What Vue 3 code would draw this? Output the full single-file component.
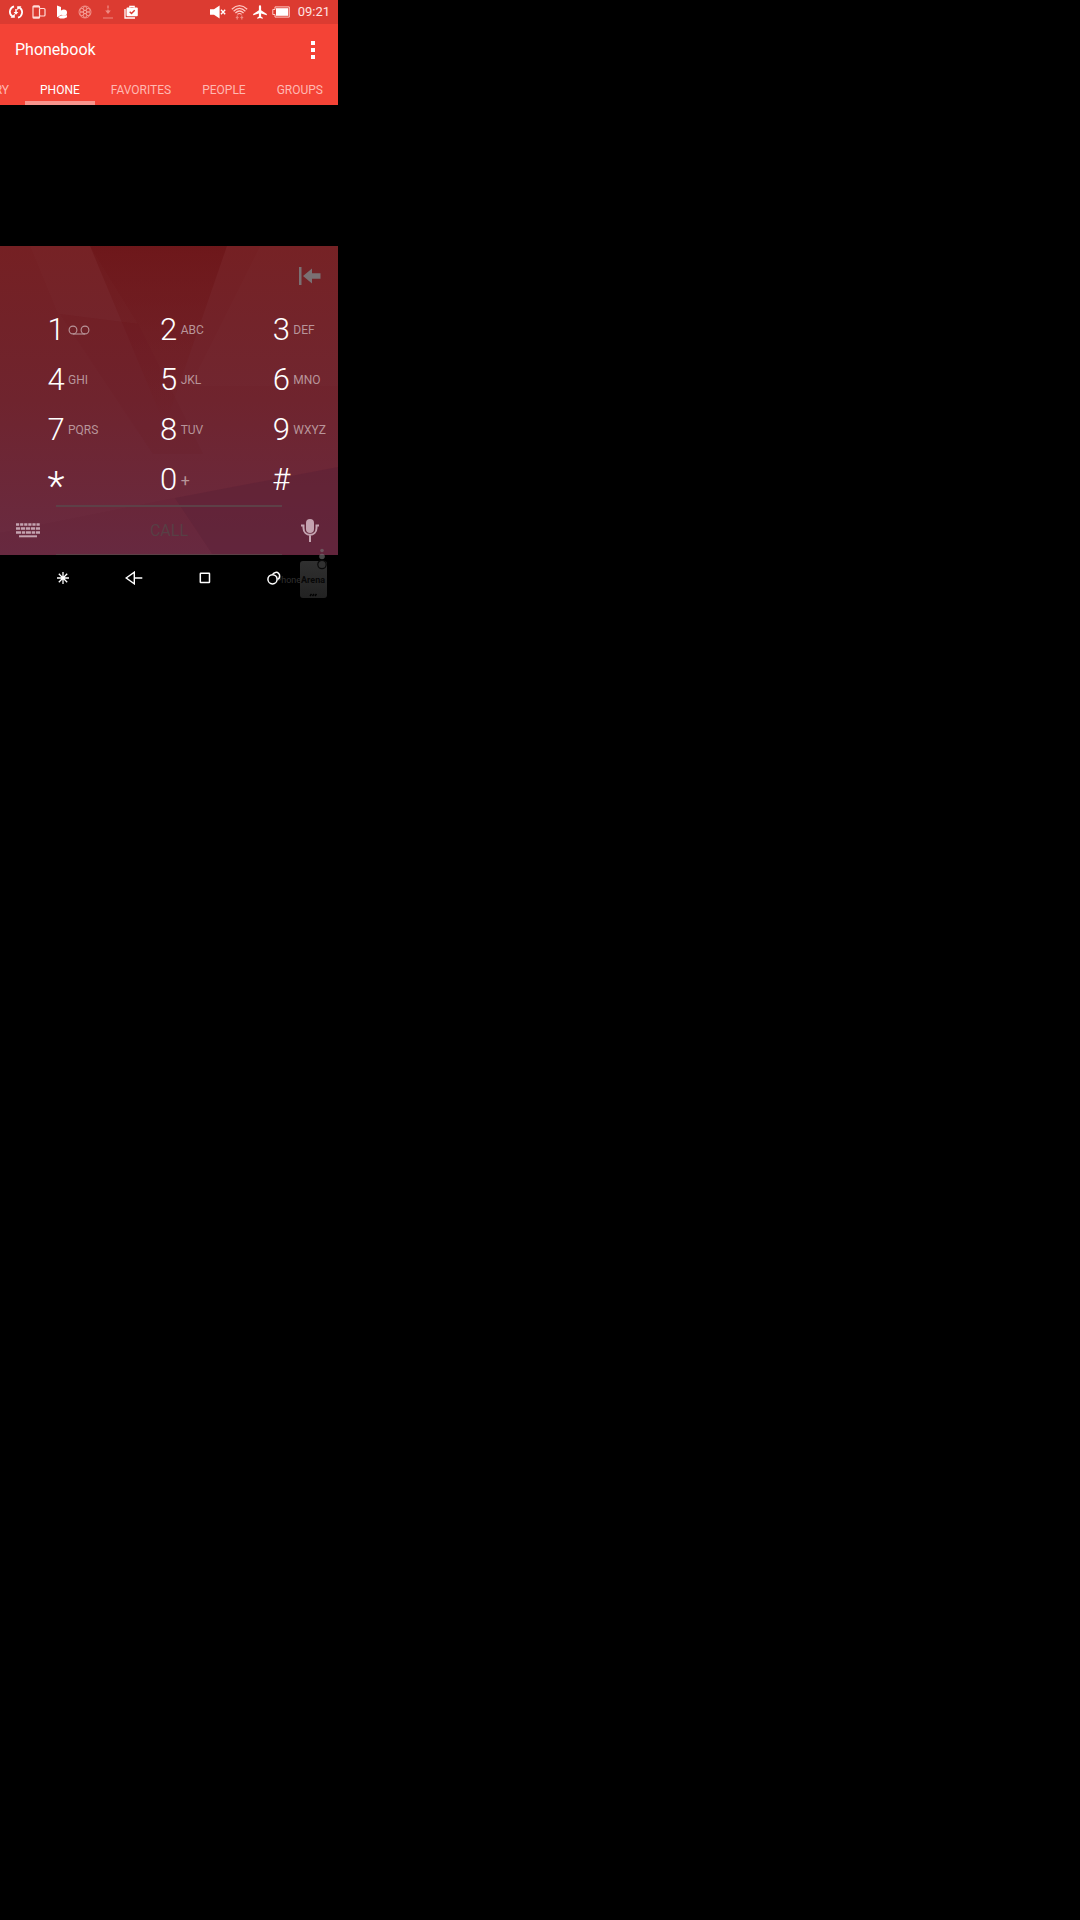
<script setup>
import { ref } from 'vue'

const tabs = ['CALL HISTORY', 'PHONE', 'FAVORITES', 'PEOPLE', 'GROUPS']
const active = ref('PHONE')
const keys = [
  { digit: '1', voicemail: true },
  { digit: '2', letters: 'ABC' },
  { digit: '3', letters: 'DEF' },
  { digit: '4', letters: 'GHI' },
  { digit: '5', letters: 'JKL' },
  { digit: '6', letters: 'MNO' },
  { digit: '7', letters: 'PQRS' },
  { digit: '8', letters: 'TUV' },
  { digit: '9', letters: 'WXYZ' },
  { digit: '*', star: true },
  { digit: '0', letters: '+', plus: true },
  { digit: '#' },
]
</script>

<template>
  <main class="phone">
    <header class="top">
      <div class="status">
        <div class="notices">
          <svg width="14" height="14" viewBox="0 0 14 14" fill="none" stroke="#fff" stroke-width="1.8">
            <path d="M5 1.3A5.700 5.700 0 0 0 3.600 11.600M9 12.700A5.700 5.700 0 0 0 10.400 2.400" />
            <path d="M1.500 12.800h4.300V8.800zM12.500 1.200H8.200v4z" fill="#fff" stroke="none" />
            <path d="M7 4v4" stroke-width="1.5" />
            <path d="M4.600 7h4.800L7 9.800z" fill="#fff" stroke="none" />
          </svg>
          <svg width="14" height="14" viewBox="0 0 14 14" fill="none" stroke="#ffdcd8" stroke-width="1.2">
            <path d="M7.500 3.500V1.800a1 1 0 0 0-1-1h-4.500a1 1 0 0 0-1 1v10.400a1 1 0 0 0 1 1h4.500a1 1 0 0 0 1-1v-1.700M1 2h6.500M1 12h6.500" />
            <rect x="7.500" y="3.500" width="5.500" height="7.500" rx="1" />
          </svg>
          <svg width="14" height="14" viewBox="0 0 14 14" fill="#fff">
            <path d="M2 .5 6 2v8l-4 2.200z" />
            <circle cx="8.800" cy="7.600" r="3.200" />
            <path d="M3 12 6 10.500l6-.3v2L9 13.500H5z" />
          </svg>
          <svg width="14" height="14" viewBox="0 0 14 14" fill="none" stroke="#f5a39c" stroke-width="0.8">
            <circle cx="7" cy="7" r="6" />
            <circle cx="7" cy="7" r="1.7" />
            <circle cx="7" cy="3.6" r="2" /><circle cx="7" cy="10.4" r="2" />
            <circle cx="4" cy="5.3" r="2" /><circle cx="10" cy="5.3" r="2" />
            <circle cx="4" cy="8.7" r="2" /><circle cx="10" cy="8.7" r="2" />
          </svg>
          <svg width="14" height="14" viewBox="0 0 14 14" fill="none" stroke="#ee8a82" stroke-width="1.3">
            <path d="M7 .5v7" stroke-dasharray="3 1" />
            <path d="M4.2 5.5h5.6L7 9z" fill="#ee8a82" stroke="none" />
            <path d="M2 13h10" stroke-width="1" />
          </svg>
          <svg width="14" height="14" viewBox="0 0 14 14">
            <path d="M1 4v9h10" fill="none" stroke="#fff" stroke-width="1.3" />
            <path d="M5.8 2.8V1.4h4.4v1.4" fill="none" stroke="#fff" stroke-width="1.2" />
            <rect x="2.5" y="2.6" width="11.3" height="8.6" rx="1" fill="#fff" />
            <path d="m5.7 6.8 1.8 1.8 3.2-3.4" fill="none" stroke="#dc3a31" stroke-width="1.4" />
          </svg>
        </div>
        <div class="system">
          <svg width="16" height="14" viewBox="0 0 16 14" fill="#fff">
            <path d="M0 4.2h4L9.600.6v12.800L4 9.800H0z" />
            <path d="m11 4.800 4.200 4.400M15.200 4.800 11 9.200" stroke="#fff" stroke-width="1.4" />
          </svg>
          <svg width="17" height="15" viewBox="0 0 17 15" fill="none" stroke="#ffc8c3" stroke-width="1.2">
            <path d="M.8 4.200Q8.500-2.800 16.200 4.200M2.600 6.200Q8.500.6 14.400 6.200M4.400 8Q8.500 4 12.600 8M6.400 9.400Q8.500 7.600 10.600 9.400" />
            <path d="M6.200 10.500v4M4.800 12.500h2.800M10.800 10.500v4M9.400 12.500h2.800" stroke="#ee8a82" />
          </svg>
          <svg width="14" height="14" viewBox="0 0 14 14" fill="#fff">
            <path d="M7 .2c.8 0 1.100.7 1.100 1.400v3.700l5.700 3.600v1.400L8.100 8.500v3l1.700 1.300v1L7 13.100l-2.800.7v-1l1.700-1.300v-3L.2 10.300V8.900l5.700-3.600V1.600C5.900.9 6.200.2 7 .2z" />
          </svg>
          <svg width="18" height="12" viewBox="0 0 18 12">
            <path d="M3 .9h14.300v10.200H3V8.500H.8v-5H3z" fill="none" stroke="#ffc8c3" stroke-width="1" />
            <rect x="4" y="2.200" width="12.200" height="7.600" fill="#fff" />
          </svg>
          <time>09:21</time>
        </div>
      </div>
      <div class="appbar">
        <h1>Phonebook</h1>
        <button class="more" aria-label="More options"><i /><i /><i /></button>
      </div>
      <nav class="tabs">
        <button v-for="tab in tabs" :key="tab" :class="{ active: tab === active }" @click="active = tab">{{ tab }}</button>
      </nav>
    </header>

    <section class="results" />

    <section class="dialer">
      <svg class="facets" viewBox="0 0 338 309" preserveAspectRatio="none" aria-hidden="true">
        <defs>
          <linearGradient id="wash" x1="0" y1="0" x2="0" y2="1">
            <stop offset="0" stop-color="#752023" />
            <stop offset=".5" stop-color="#6f242e" />
            <stop offset="1" stop-color="#692b42" />
          </linearGradient>
          <linearGradient id="shade" x1="0" y1="0" x2="0" y2="1">
            <stop offset="0" stop-color="#6c1518" stop-opacity=".8" />
            <stop offset="1" stop-color="#6e1c22" stop-opacity="0" />
          </linearGradient>
        </defs>
        <rect width="338" height="309" fill="url(#wash)" />
        <path d="M90 0h137l-62 180z" fill="url(#shade)" />
        <path d="M30 0h60l48 78-80-10z" fill="#fff" opacity=".012" />
        <path d="M260 0h78v140H190z" fill="#fff" opacity=".01" />
        <path d="M60 68 138 78l65 130-50 0z" fill="#6c151a" opacity=".1" />
        <path d="M338 221 175 252l38 57h125z" fill="#581f34" opacity=".4" />
        <path d="M175 252 60 275 0 287v22h213z" fill="#581f34" opacity=".1" />
      </svg>

      <div class="entry">
        <button aria-label="Delete">
          <svg width="22" height="18" viewBox="0 0 22 18" fill="#7a7073">
            <path d="M0 0h2.500v18H0zM4 9l9-7.500v4.700h8.500v5.600H13v4.700z" />
          </svg>
        </button>
      </div>

      <div class="keypad">
        <button v-for="key in keys" :key="key.digit">
          <span class="digit" :class="{ star: key.star }">{{ key.digit }}</span>
          <svg v-if="key.voicemail" width="22" height="10" viewBox="0 0 22 10" fill="none" stroke="#b8959a" stroke-width="1.1" role="img" aria-label="Voicemail">
            <circle cx="5" cy="5" r="3.900" /><circle cx="17" cy="5" r="3.900" /><path d="M5 9h12" />
          </svg>
          <span v-else-if="key.letters" class="letters" :class="{ plus: key.plus }">{{ key.letters }}</span>
        </button>
      </div>

      <div class="actions">
        <button class="side" aria-label="Keyboard">
          <svg width="24" height="15" viewBox="0 0 24 15" fill="none" stroke="#c4a3b0" stroke-width="2.400">
            <path d="M0 1.500h24" stroke-dasharray="3.200 .9" />
            <path d="M0 5.500h24" stroke-dasharray="4.200 .8" />
            <path d="M0 9.500h24" stroke-dasharray="5 .8 3.300 .8" />
            <path d="M3 13.300h18" stroke-width="2" />
          </svg>
        </button>
        <button class="call">CALL</button>
        <button class="side" aria-label="Voice input">
          <svg width="18" height="23" viewBox="0 0 18 23" fill="none" stroke="#c4a3b0" stroke-width="2">
            <rect x="5" y="0" width="8" height="14" rx="4" fill="#c4a3b0" stroke="none" />
            <path d="M0 6.500h2.500V9c0 9 13 9 13 0V6.500H18M9 15.500V23" />
          </svg>
        </button>
      </div>
    </section>

    <footer class="navbar">
      <button aria-label="Shortcuts">
        <svg width="12" height="12" viewBox="0 0 12 12" stroke="#fff" stroke-width="1.300">
          <path d="M6 0v12M0 6h12M1.800 1.800l8.400 8.400M10.200 1.800l-8.400 8.400" />
        </svg>
      </button>
      <button aria-label="Back">
        <svg width="18" height="14" viewBox="0 0 18 14" fill="none" stroke="#fff" stroke-width="1.400">
          <path d="M9.300 1.200v11.600L1.200 7zM9.300 7h8" />
        </svg>
      </button>
      <button aria-label="Home">
        <svg width="12" height="12" viewBox="0 0 12 12" fill="none" stroke="#fff" stroke-width="1.500">
          <rect x="1.300" y="1.300" width="9.200" height="9.200" rx=".5" />
        </svg>
      </button>
      <button class="recent" aria-label="Recent apps">
        <svg width="14" height="14" viewBox="0 0 14 14" fill="none" stroke="#fff" stroke-width="1.500">
          <circle cx="5.500" cy="8.300" r="4.600" />
          <path d="M5.800 3.200a3.700 3.700 0 1 1 4.800 5.200" />
        </svg>
      </button>
      <div class="brand">
        <svg width="28" height="50" viewBox="0 0 28 50">
          <defs>
            <linearGradient id="body" x1="0" y1="0" x2="0" y2="1">
              <stop offset="0" stop-color="#303030" />
              <stop offset="1" stop-color="#222" />
            </linearGradient>
          </defs>
          <circle cx="22" cy="2.500" r="1.800" fill="#777" opacity=".6" />
          <circle cx="22" cy="8.500" r="2.800" fill="#777" opacity=".6" />
          <rect x="0" y="13" width="27" height="37" rx="3" fill="url(#body)" />
          <circle cx="22" cy="16.500" r="4.200" fill="#303030" stroke="#0a0a0a" stroke-width="1.200" />
          <path d="m10 48 1.500-2m1 2 1.500-2m1 2 1.500-2" stroke="#000" stroke-width="1.400" />
        </svg>
        <span class="mark"><span>Phone</span><b>Arena</b></span>
      </div>
    </footer>
  </main>
</template>

<style>
html,
body {
  background: #000;
}
</style>

<style scoped>
.phone {
  max-width: 338px;
  background: #000;
  color: #fff;
  font-family: Roboto, sans-serif;
}
button {
  margin: 0;
  padding: 0;
  border: 0;
  background: none;
  color: inherit;
  font: inherit;
  cursor: pointer;
}
svg {
  display: block;
  flex: none;
}
.top {
  background: #f44336;
}
.status {
  display: flex;
  align-items: center;
  justify-content: space-between;
  height: 24px;
  padding: 0 8px 0 9px;
  background: #dc3b31;
}
.notices {
  display: flex;
  gap: 9px;
}
.system {
  display: flex;
  align-items: center;
  gap: 5px;
}
.system time {
  margin-left: 3px;
  font-size: 13px;
  line-height: 24px;
  color: #ffe4e1;
}
.appbar {
  display: flex;
  align-items: center;
  justify-content: space-between;
  height: 52px;
  padding: 0 21px 0 15px;
}
h1 {
  margin: 0;
  font-size: 16px;
  font-weight: 400;
  line-height: 24px;
}
.more {
  display: grid;
  gap: 3px;
  padding: 0 2px;
}
.more i {
  width: 4px;
  height: 4px;
  background: #fff;
}
.tabs {
  display: flex;
  justify-content: flex-end;
  gap: 1px;
  height: 29px;
  overflow: hidden;
}
.tabs button {
  flex: none;
  padding: 4px 15px 0;
  border-bottom: 4px solid transparent;
  font-size: 12px;
  line-height: 21px;
  color: #ffb9b2;
}
.tabs .active {
  border-color: #f9958d;
  color: #fff;
}
.results {
  height: 141px;
}
.dialer {
  position: relative;
  z-index: 0;
}
.facets {
  position: absolute;
  z-index: -1;
  inset: 0;
  width: 100%;
  height: 100%;
}
.entry {
  display: flex;
  align-items: center;
  justify-content: flex-end;
  height: 59px;
  padding-right: 17px;
}
.keypad {
  display: grid;
  grid-template-columns: repeat(3, 1fr);
  grid-auto-rows: 50px;
}
.keypad button {
  display: flex;
  align-items: center;
  gap: 3px;
  min-width: 0;
  padding-left: 47px;
}
.digit {
  width: 18px;
  font-size: 31px;
  font-weight: 300;
  line-height: 50px;
  text-align: center;
}
.star {
  padding-top: 14px;
  font-size: 40px;
  line-height: 36px;
}
.letters {
  font-size: 12px;
  color: #b8959a;
}
.plus {
  font-size: 16px;
}
.actions {
  display: flex;
  height: 50px;
}
.side {
  display: flex;
  flex: 1;
  align-items: center;
  justify-content: center;
}
.call {
  flex: 4;
  border-top: 2px solid #5d4047;
  border-bottom: 1px solid #5d4047;
  font-size: 16px;
  color: #583f45;
}
.navbar {
  position: relative;
  display: flex;
  align-items: center;
  gap: 56px;
  height: 45px;
  padding-left: 57px;
}
.brand {
  position: absolute;
  right: 10px;
  bottom: 2px;
}
.mark {
  position: absolute;
  right: 3px;
  bottom: 10px;
  display: flex;
  font-size: 9px;
  line-height: 16px;
  color: #303030;
}
.mark b {
  color: #070707;
}
.recent {
  position: relative;
  z-index: 1;
}
</style>
